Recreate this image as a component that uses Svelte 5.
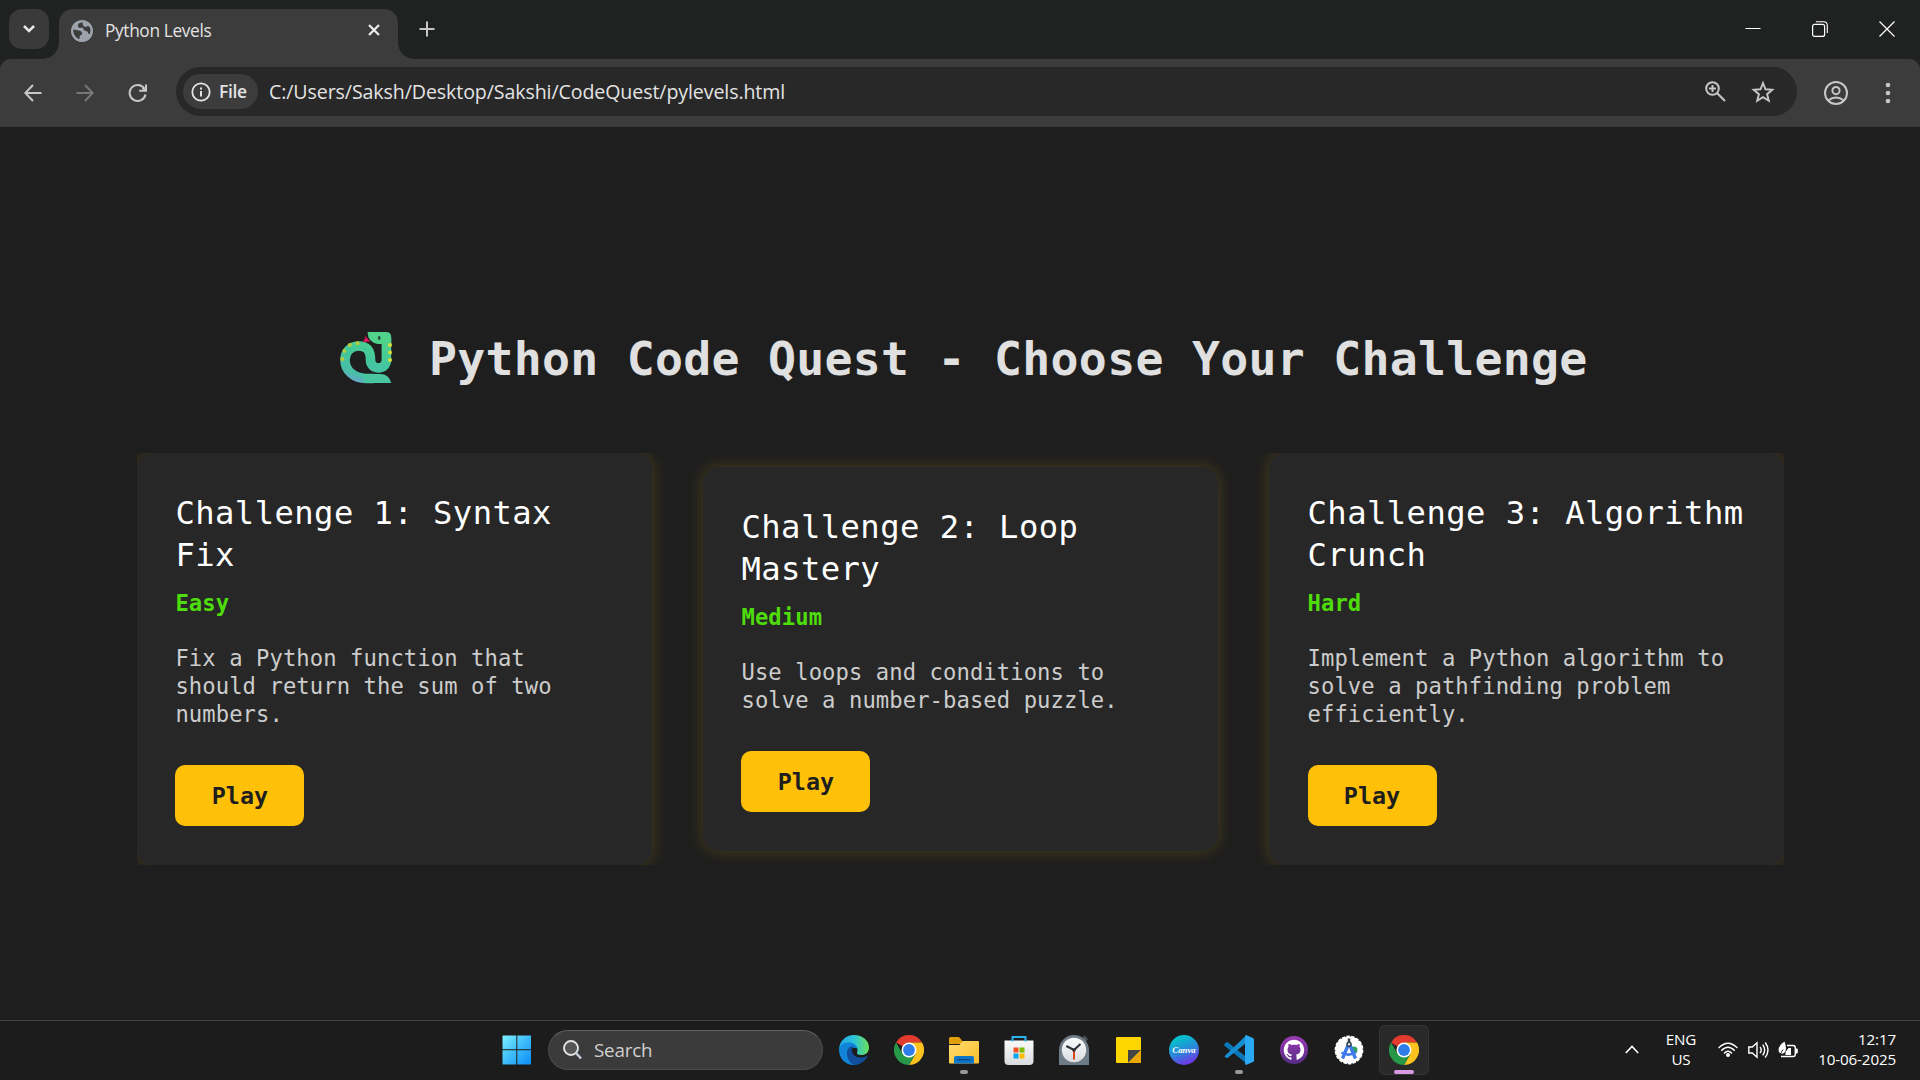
<script>
  const challenges = [
    {
      title: 'Challenge 1: Syntax Fix',
      level: 'Easy',
      text: 'Fix a Python function that should return the sum of two numbers.'
    },
    {
      title: 'Challenge 2: Loop Mastery',
      level: 'Medium',
      text: 'Use loops and conditions to solve a number-based puzzle.'
    },
    {
      title: 'Challenge 3: Algorithm Crunch',
      level: 'Hard',
      text: 'Implement a Python algorithm to solve a pathfinding problem efficiently.'
    }
  ];
  const apps = [
    { id: 'edge' },
    { id: 'chrome' },
    { id: 'files', running: true },
    { id: 'store' },
    { id: 'clock' },
    { id: 'notes' },
    { id: 'canva' },
    { id: 'code', running: true },
    { id: 'github' },
    { id: 'studio' },
    { id: 'chrome', active: true }
  ];
</script>

{#snippet appIcon(id)}
  {#if id === 'edge'}
    <svg viewBox="0 0 30 30" width="30" height="30">
      <path d="M0 15C0 6 7 0 15 0c9 0 15 6 15 12.500c0 5-3.500 7.500-7.500 7.500c-3 0-5-.8-4.500-2.500c1.500-3 0-7-5-7.500C7 9.500 2 13 0 15z" fill="url(#edgeTop)" />
      <path d="M0 15C1 9 6 7 11 7.500c4 .5 7 3 7.500 6.500c-2-2-6-1.500-7.500 2c-1.500 5 2 11 8 13c-2 .7-3 1-4.500 1C6 30 0 23 0 15z" fill="#0f84d8" />
      <path d="M8 17c.3-4 4-6.500 7-5.500c-2 1-2.700 2.800-2 5c1 4 5 6 9 6c3 0 4.500-1 5.800-1.600c.6-.2.9.3.5.9C25.500 26.500 21 30 15.500 30C10.500 28.500 7.500 23 8 17z" fill="#114f9c" />
    </svg>
  {:else if id === 'chrome'}
    <svg viewBox="0 0 30 30" width="30" height="30">
      <path d="M15 15L2 7.500A15 15 0 0 1 28 7.500H15z" fill="#e33b2e" />
      <path d="M28 7.500A15 15 0 0 1 15 30L21.500 18.750L15 7.500z" fill="#fcc31e" />
      <path d="M2 7.500A15 15 0 0 0 15 30L21.500 18.750L8.500 18.750z" fill="#279847" />
      <circle cx="15" cy="15" r="7.500" fill="#fff" />
      <circle cx="15" cy="15" r="5.900" fill="#2f7de9" />
    </svg>
  {:else if id === 'files'}
    <svg viewBox="0 0 30 30" width="30" height="30">
      <path d="M0 3.500Q0 2 1.500 2H9q1 0 1.700.8L13 5.500V9H0z" fill="#dfa00c" />
      <path d="M0 10h10.500l3-4H29q1 0 1 1v20.500q0 1-1 1H1q-1 0-1-1z" fill="url(#folder)" />
      <path d="M5 28.500V23q0-2 2-2h16q2 0 2 2v5.500z" fill="#0f75c9" />
      <path d="M8.500 24.700h13" stroke="#074a84" stroke-width="1.300" />
    </svg>
  {:else if id === 'store'}
    <svg viewBox="0 0 30 30" width="30" height="30">
      <path d="M.5 5.500h29V26q0 4-4 4h-21q-4 0-4-4z" fill="url(#bag)" />
      <path d="M8.500 6.500V2h13v4.500" fill="none" stroke="#2bb3ee" stroke-width="2" />
      <path d="M9.500 12.500h5v5h-5z" fill="#f25022" /><path d="M15.500 12.500h5v5h-5z" fill="#7fba00" />
      <path d="M9.500 18.500h5v5h-5z" fill="#00a4ef" /><path d="M15.500 18.500h5v5h-5z" fill="#ffb900" />
    </svg>
  {:else if id === 'clock'}
    <svg viewBox="0 0 30 30" width="30" height="30">
      <path d="M23 3l2.500-2.500L29 4l-2.500 3z" fill="#4b5258" />
      <path d="M0 30V15a15 15 0 0 1 30 0v15z" fill="#6f7b86" />
      <circle cx="15" cy="15" r="12.200" fill="url(#bag)" />
      <path d="M15 15v9.500" stroke="#d9481f" stroke-width="2" />
      <path d="M7.300 11L15 15l6.500-6" fill="none" stroke="#2b3036" stroke-width="2" />
      <circle cx="15" cy="15" r="1.800" fill="#2b3036" />
    </svg>
  {:else if id === 'notes'}
    <svg viewBox="0 0 30 30" width="30" height="30">
      <path d="M3 2h23q1 0 1 1v24q0 1-1 1H3q-1 0-1-1V3q0-1 1-1z" fill="#fdd600" />
      <path d="M14 15h13L14 28z" fill="#454545" /><path d="M27 15v12q0 1-1 1H14z" fill="#eba706" />
    </svg>
  {:else if id === 'canva'}
    <svg viewBox="0 0 30 30" width="30" height="30">
      <circle cx="15" cy="15" r="15" fill="url(#canva)" />
      <text x="15" y="18" text-anchor="middle" class="canva-word" textLength="23.500" lengthAdjust="spacingAndGlyphs">Canva</text>
    </svg>
  {:else if id === 'code'}
    <svg viewBox="0 0 30 30" width="30" height="30">
      <path d="M.7 8.800L2.200 7.200q.8-.5 1.600 0L23 22.500V29L.7 11q-.9-1 0-2.200z" fill="#0876b9" />
      <path d="M.7 21L22 .5V8L3.800 22.700q-.8.500-1.600 0L.7 21.300z" fill="#168fd1" />
      <path d="M22 0l7 3q1 .5 1 1.500v21q0 1-1 1.500l-7 3q-1-.3-1-2V2q0-1.600 1-2z" fill="#2ba8f2" />
    </svg>
  {:else if id === 'github'}
    <svg viewBox="0 0 30 30" width="30" height="30">
      <circle cx="15" cy="15" r="14" fill="url(#git)" />
      <g transform="translate(4.800 4.800) scale(1.275)">
        <path fill="#fff" d="M8 0C3.580 0 0 3.580 0 8c0 3.540 2.290 6.530 5.470 7.590.4.070.55-.17.55-.38 0-.19-.01-.82-.01-1.490-2.010.37-2.530-.49-2.690-.94-.09-.23-.48-.94-.82-1.130-.28-.15-.68-.52-.01-.53.63-.01 1.080.58 1.230.82.72 1.210 1.870.87 2.330.66.07-.52.28-.87.51-1.070-1.780-.2-3.640-.89-3.640-3.950 0-.87.31-1.590.82-2.150-.08-.2-.36-1.020.08-2.120 0 0 .67-.21 2.200.82.64-.18 1.320-.27 2-.27s1.360.09 2 .27c1.530-1.040 2.200-.82 2.200-.82.44 1.100.16 1.920.08 2.120.51.56.82 1.270.82 2.150 0 3.070-1.870 3.750-3.650 3.950.29.25.54.73.54 1.480 0 1.070-.01 1.930-.01 2.200 0 .21.15.46.55.38A8.010 8.010 0 0 0 16 8c0-4.420-3.580-8-8-8z" />
      </g>
    </svg>
  {:else}
    <svg viewBox="0 0 30 30" width="30" height="30">
      <circle cx="15" cy="15" r="13.600" fill="#fff" stroke="#fff" stroke-width="1.600" stroke-dasharray="3.500 1.200" />
      <circle cx="20" cy="15" r="3.500" fill="#30a35b" />
      <path d="M15 8L8.500 23.500M15 8l6.500 15.500" stroke="#3d7bea" stroke-width="3.400" />
      <path d="M7.500 17.500q7.500 4.500 14.500-.5" fill="none" stroke="#3d7bea" stroke-width="2.600" />
      <path d="M13.800 3.500h2.400v4h-2.400z" fill="#343b44" />
      <circle cx="15" cy="9.300" r="2" fill="#dfe9fa" stroke="#343b44" stroke-width="1.400" />
    </svg>
  {/if}
{/snippet}

<div class="screen">
  <svg class="defs" width="0" height="0" aria-hidden="true">
    <defs>
      <linearGradient id="edgeTop"><stop offset="0" stop-color="#20a3e8" /><stop offset=".5" stop-color="#2cc4d8" /><stop offset="1" stop-color="#6be25a" /></linearGradient>
      <linearGradient id="folder" x1="0" y1="0" x2="1" y2="1"><stop offset="0" stop-color="#ffdc70" /><stop offset="1" stop-color="#fcbf2c" /></linearGradient>
      <linearGradient id="bag" x1="0" y1="0" x2="0" y2="1"><stop offset="0" stop-color="#fafafa" /><stop offset="1" stop-color="#d9dcdf" /></linearGradient>
      <linearGradient id="canva" x1=".3" y1="0" x2=".7" y2="1"><stop offset=".1" stop-color="#05c0cb" /><stop offset=".55" stop-color="#2d83dc" /><stop offset="1" stop-color="#7a2be8" /></linearGradient>
      <linearGradient id="git" x1="0" y1="0" x2="0" y2="1"><stop offset="0" stop-color="#9a3bb3" /><stop offset="1" stop-color="#552c86" /></linearGradient>
      <linearGradient id="win" x1="0" y1="0" x2="1" y2="1"><stop offset="0" stop-color="#7cf0ff" /><stop offset=".5" stop-color="#3ebcfb" /><stop offset="1" stop-color="#0a8cf6" /></linearGradient>
      <linearGradient id="snake" gradientUnits="userSpaceOnUse" x1="35" y1="0" x2="18" y2="51"><stop offset="0" stop-color="#52d68a" /><stop offset=".5" stop-color="#43c79c" /><stop offset=".85" stop-color="#49bfa8" /><stop offset="1" stop-color="#69a5cb" /></linearGradient>
    </defs>
  </svg>

  <header class="tabstrip">
    <button class="tab-search" aria-label="Search tabs">
      <svg width="14" height="10" viewBox="0 0 14 10"><path d="M2 2l5 5 5-5" fill="none" stroke="#e6e6e6" stroke-width="2.500" /></svg>
    </button>
    <div class="tab">
      <svg class="globe" width="22" height="22" viewBox="0 0 22 22">
        <circle cx="11" cy="11" r="10.800" fill="#9da3ac" />
        <path d="M2.300 9.500L8 10.500q3 .5 3.200 3.300q0 1.200-2.200 1.700q-.6 1-.5 3.800C4.500 18 1.800 14 2.300 9.500z" fill="#3c3c3c" />
        <path d="M11.500 2Q6.500 3 7 6.200q.5 2.300 3 1.500q1.500-.6 2.200.8q.3 2.300 2.800 2.600q1.800.2 2.100 1.700q.3 1.700 1.800 1.200C20 10 19.700 7.500 17 5.800q-1.500 1.500-3 1q-2.500-.6-2.500-4.800z" fill="#3c3c3c" />
        <circle cx="11" cy="11" r="9.900" fill="none" stroke="#9da3ac" stroke-width="1.800" />
      </svg>
      <span class="tab-title">Python Levels</span>
      <svg class="tab-close" width="12" height="12" viewBox="0 0 12 12"><path d="M1 1l10 10M11 1L1 11" stroke="#eee" stroke-width="2.200" /></svg>
    </div>
    <svg class="plus" width="16" height="16" viewBox="0 0 16 16"><path d="M8 .5v15M.5 8h15" stroke="#c7c7c7" stroke-width="2" /></svg>
    <div class="window-controls">
      <svg width="16" height="16" viewBox="0 0 16 16"><path d="M.5 7.500h15" stroke="#fff" /></svg>
      <svg width="16" height="16" viewBox="0 0 16 16"><rect x=".6" y="3.400" width="12" height="12" rx="2" fill="none" stroke="#fff" stroke-width="1.200" /><path d="M4 .8h7.500q3.800 0 3.800 3.800V12" fill="none" stroke="#fff" stroke-width="1.100" /></svg>
      <svg width="16" height="16" viewBox="0 0 16 16"><path d="M.5 .5l15 15M15.500 .5l-15 15" stroke="#fff" stroke-width="1.200" /></svg>
    </div>
  </header>

  <div class="toolbar-back">
    <nav class="toolbar">
      <div class="nav-icons">
        <svg width="18" height="18" viewBox="0 0 18 18"><path d="M17.500 9H1.500M9 1L1.300 9 9 17" fill="none" stroke="#c7c7c7" stroke-width="2" /></svg>
        <svg width="18" height="18" viewBox="0 0 18 18"><path d="M.5 9h16M9 1l7.700 8L9 17" fill="none" stroke="#777" stroke-width="2" /></svg>
        <svg width="20" height="20" viewBox="0 0 20 20"><path d="M17.500 11.500A8 8 0 1 1 16.300 5.500M18 1.500v6.300h-6.800M14.500 4.800l3 3" fill="none" stroke="#c7c7c7" stroke-width="2" /></svg>
      </div>
      <div class="omnibox">
        <div class="chip">
          <svg width="20" height="20" viewBox="0 0 20 20"><circle cx="10" cy="10" r="8.700" fill="none" stroke="#e3e3e3" stroke-width="1.800" /><path d="M10 9v5.500M10 5.500v2" stroke="#e3e3e3" stroke-width="2" /></svg>
          <span>File</span>
        </div>
        <span class="url">C:/Users/Saksh/Desktop/Sakshi/CodeQuest/pylevels.html</span>
        <svg class="zoom" width="21" height="21" viewBox="0 0 21 21"><circle cx="7.500" cy="7.500" r="6.300" fill="none" stroke="#c7c7c7" stroke-width="2" /><path d="M12 12l8 8M7.500 4v7M4 7.500h7" stroke="#c7c7c7" stroke-width="2" /></svg>
        <svg width="24" height="24" viewBox="0 0 24 24"><path d="M12 3l2.500 6.300 6.800.5-5.200 4.400 1.700 6.600-5.800-3.600-5.800 3.600 1.700-6.600L2.700 9.800l6.800-.5z" fill="none" stroke="#c7c7c7" stroke-width="1.900" /></svg>
      </div>
      <svg class="profile" width="24" height="24" viewBox="0 0 24 24"><circle cx="12" cy="12" r="11" fill="none" stroke="#c7c7c7" stroke-width="2" /><circle cx="12" cy="9.600" r="3.600" fill="none" stroke="#c7c7c7" stroke-width="2" /><path d="M4 19.500q8-6 16 0" fill="none" stroke="#c7c7c7" stroke-width="2" /></svg>
      <svg class="dots" width="6" height="22" viewBox="0 0 6 22" fill="#c7c7c7"><circle cx="3" cy="3" r="2.300" /><circle cx="3" cy="11" r="2.300" /><circle cx="3" cy="19" r="2.300" /></svg>
    </nav>
  </div>

  <main>
    <h1>
      <svg width="52" height="52" viewBox="0 0 52 52">
        <path d="M46.400 6V28C46.400 38.500 30.500 38.500 30.500 28C30.500 18.500 27 14 18.500 14C9.500 14 5 21 5 28C5 38.500 14 46.500 26 46.500H34" fill="none" stroke="url(#snake)" stroke-width="9.600" />
        <path d="M27.500 0H46q5.200 0 5.200 5v7H38Q28 10.500 27.500 0z" fill="#50d28b" />
        <path d="M24 42H40q9 0 11.300 9H24z" fill="#49c6a0" />
        <path d="M29.500 8.800l-5.500-1m1-2.800l3 3.500m-4.500 1.200l4-1" fill="none" stroke="#e8175d" stroke-width="1.700" />
        <ellipse cx="39.200" cy="6" rx="1.300" ry="2" fill="#27453a" />
        <g fill="#d8dc3a"><ellipse cx="50" cy="13" rx="2" ry="2" /><ellipse cx="50" cy="20.500" rx="2" ry="2" /><ellipse cx="50" cy="28" rx="2" ry="2" /></g>
        <g fill="#b6cc3b"><circle cx="17.500" cy="11.300" r="2" /><circle cx="9.800" cy="13" r="2" /><circle cx="4.400" cy="19" r="2" /><circle cx="2.300" cy="27" r="2" /></g>
      </svg>
      <span>Python Code Quest - Choose Your Challenge</span>
    </h1>
    <section class="cards">
      {#each challenges as c}
        <article class="card">
          <h2>{c.title}</h2>
          <div class="level">{c.level}</div>
          <p>{c.text}</p>
          <button class="play">Play</button>
        </article>
      {/each}
    </section>
  </main>

  <footer class="taskbar">
    <svg class="start" width="30" height="30" viewBox="0 0 30 30"><path d="M1 .5h13.300v13.800H.5V1zM15.300 .5H29v13.800H15.300zM.5 15.300h13.800V29.500H.5zM15.300 15.300H29v14.200H15.300z" fill="url(#win)" /></svg>
    <div class="search">
      <svg width="19" height="20" viewBox="0 0 19 20"><circle cx="8" cy="8" r="7" fill="#555" stroke="#e2e4e6" stroke-width="1.900" /><path d="M13 13l5 5.500" stroke="#c9d2dc" stroke-width="2.400" /></svg>
      <span>Search</span>
    </div>
    <div class="apps">
      {#each apps as a}
        <div class="app" class:active={a.active}>
          {@render appIcon(a.id)}
          {#if a.running || a.active}<i></i>{/if}
        </div>
      {/each}
    </div>
    <div class="tray">
      <svg class="chev" width="14" height="9" viewBox="0 0 14 9"><path d="M.8 8L7 1.500 13.200 8" fill="none" stroke="#fff" stroke-width="1.600" /></svg>
      <div class="lang"><span>ENG</span><span>US</span></div>
      <svg class="wifi" width="20" height="16" viewBox="0 0 20 16"><g fill="none" stroke="#fff" stroke-width="1.400"><path d="M.6 6Q10-3.500 19.400 6" /><path d="M3.300 8.800Q10 1.800 16.700 8.800" /><path d="M6 11.500Q10 7 14 11.500" /></g><circle cx="10" cy="13" r="2" fill="#fff" /></svg>
      <svg class="volume" width="21" height="18" viewBox="0 0 21 18" fill="none" stroke="#fff" stroke-width="1.400"><path d="M.8 6h3.500L9 1.800v14.400L4.300 12H.8z" /><path d="M12 6q2.500 3 0 6M14.700 3.700q4 5.300 0 10.600M17.200 1.500q5.600 7.500 0 15" /></svg>
      <svg class="battery" width="21" height="18" viewBox="0 0 21 18"><path d="M9 4.500h6q2.300 0 2.300 2.300v6.400q0 2.300-2.300 2.300H3" fill="none" stroke="#fff" stroke-width="1.400" /><path d="M17.500 7.500h1.300q1 0 1 1v3q0 1-1 1h-1.300z" fill="#fff" /><path d="M7.500 14v-3l3-4H13v7z" fill="#fff" /><path d="M6.500 .5Q-.5 5 .8 10.500Q2 13.500 5 12.500Q10 10 6.500 .5z" fill="#fff" /><path d="M1.500 14.500L5 8.500" stroke="#1c1c1c" stroke-width=".9" /></svg>
      <div class="time"><span>12:17</span><span>10-06-2025</span></div>
    </div>
  </footer>
</div>

<style>
  :global(body) { background: #1e1e1e; }
  .screen {
    width: 1920px; height: 1080px; overflow: hidden;
    display: flex; flex-direction: column;
    background: #1e1e1e; color: #e3e3e3;
    font-family: "Open Sans", "Noto Sans", sans-serif;
  }
  .screen, .screen * { box-sizing: border-box; }
  .defs { position: absolute; }
  svg { display: block; flex: none; }
  button { border: 0; padding: 0; }
  .tabstrip { height: 59px; background: #202221; display: flex; align-items: flex-start; flex: none; }
  .tab-search {
    width: 40px; height: 40px; margin: 9px 10px 0 9px; border-radius: 13px;
    background: #3a3a3a; display: grid; place-items: center;
  }
  .tab {
    position: relative; width: 339px; height: 50px; margin-top: 9px; padding: 0 18px 6px 12px;
    display: flex; align-items: center; background: #3c3c3c; border-radius: 14px 14px 0 0;
  }
  .tab::before, .tab::after {
    content: ""; position: absolute; bottom: 0; width: 16px; height: 16px;
  }
  .tab::before { left: -16px; background: radial-gradient(circle at 0 0, transparent 15.500px, #3c3c3c 16px); }
  .tab::after { right: -16px; background: radial-gradient(circle at 100% 0, transparent 15.500px, #3c3c3c 16px); }
  .tab-title { margin: 0 0 2px 12px; font-size: 17.300px; letter-spacing: -.36px; white-space: nowrap; }
  .tab-close { margin: 0 0 3px auto; }
  .plus { margin: 21px 0 0 21px; }
  .window-controls { margin: 21px 25px 0 auto; display: flex; gap: 51px; }
  .toolbar-back { height: 68px; background: #202221; flex: none; }
  .toolbar {
    height: 68px; padding-left: 24px; background: #3c3c3c; border-radius: 11px 11px 0 0;
    display: flex; align-items: center;
  }
  .nav-icons { display: flex; align-items: center; gap: 34px; width: 152px; }
  .omnibox {
    width: 1621px; height: 49px; padding: 0 22px 0 7px; border-radius: 25px; background: #282828;
    display: flex; align-items: center; margin-bottom: 3px;
  }
  .chip {
    width: 75px; height: 35px; padding-left: 8px; border-radius: 18px; background: #3c3c3c;
    display: flex; align-items: center; gap: 8px; font-size: 17.500px; font-weight: 600; letter-spacing: -.4px;
  }
  .chip span { margin-top: -1px; }
  .url { margin-left: 11px; font-size: 19.600px; letter-spacing: -.1px; white-space: nowrap; }
  .zoom { margin: 0 25px 0 auto; }
  .profile { margin-left: 27px; }
  .dots { margin-left: 37px; }

  main {
    height: 893px; flex: none; padding: 192px 136px 0 137px;
    font-family: "DejaVu Sans Mono", monospace;
  }
  h1 {
    margin: 0; height: 74px; padding-left: 203px; display: flex; align-items: flex-start;
    color: #e0e0e0; font-size: 46.500px; letter-spacing: .260px; line-height: 80px; white-space: nowrap;
  }
  h1 svg { margin-top: 13px; }
  h1 span { margin-left: 37px; }
  .cards { margin-top: 60px; display: flex; align-items: center; gap: 51.200px; overflow: hidden; }
  .card {
    flex: 1; min-width: 0; padding: 39px 32px 39px 38.400px; border-radius: 16px; background: #272727;
    box-shadow: 0 0 16px rgba(255, 193, 7, .2);
  }
  h2 { margin: 0; color: #fff; font-size: 32.200px; font-weight: 400; line-height: 42px; letter-spacing: .440px; }
  .level { margin-top: 13px; color: #4fdc0c; font-weight: 700; font-size: 22.200px; line-height: 28px; letter-spacing: .080px; }
  p { margin: 27px 6px 37px 0; color: #ccc; font-size: 22.200px; line-height: 28px; letter-spacing: .080px; }
  .play {
    display: block; width: 129px; height: 61px; border-radius: 10px; background: #ffc107; color: #1e1e1e;
    font: 700 23.400px/59px "DejaVu Sans Mono", monospace; letter-spacing: 0; padding-top: 2px;
  }

  .taskbar {
    height: 60px; flex: none; background: #1c1c1c; border-top: 1px solid #444;
    display: flex; align-items: center; padding: 0 0 2px 502px;
  }
  .search {
    width: 275px; height: 40px; margin-left: 16px; padding-left: 14px; border-radius: 20px;
    background: #3b3b3b; border: 1px solid #4b4b4b; border-top-color: #626262;
    display: flex; align-items: center; gap: 12px; color: #d0d0d0; font-size: 18.800px; letter-spacing: -.2px;
  }
  .search span { margin-top: 1px; }
  .apps { display: flex; margin-left: 6px; gap: 5px; }
  .app { position: relative; width: 50px; height: 50px; border-radius: 6px; display: grid; place-items: center; }
  .app.active { background: #292929; box-shadow: inset 0 0 0 1px #343434; }
  .app i { position: absolute; bottom: 1px; left: 21px; width: 8px; height: 4px; border-radius: 2px; background: #999; }
  .app.active i { left: 15px; width: 20px; background: #d89ae0; }
  .canva-word { font: italic 700 8px "Liberation Serif", serif; fill: #fff; }
  .tray { margin-left: auto; padding-right: 24px; display: flex; align-items: center; color: #fff; font-size: 15.200px; line-height: 20px; letter-spacing: -.15px; }
  .lang { display: flex; flex-direction: column; align-items: center; width: 34px; margin: 0 20px 1px 25px; }
  .volume { margin: 0 9px 0 10px; }
  .time { display: flex; flex-direction: column; align-items: flex-end; width: 78px; margin: 0 0 2px 19px; white-space: nowrap; }
</style>
